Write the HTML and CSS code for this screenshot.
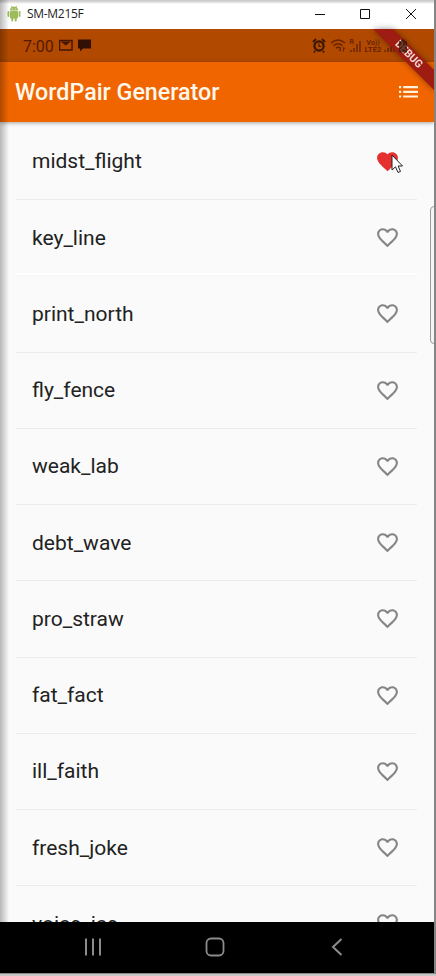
FILE: index.html
```html
<!DOCTYPE html>
<html lang="en">
<head>
<meta charset="utf-8">
<title>WordPair Generator</title>
<link rel="stylesheet" href="styles.css">
</head>
<body>
<svg class="defs" width="0" height="0">
  <symbol id="heart-outline" viewBox="0 0 24 24"><path d="M16.5 3c-1.74 0-3.41.81-4.5 2.09C10.91 3.81 9.24 3 7.5 3 4.42 3 2 5.42 2 8.5c0 3.78 3.4 6.86 8.55 11.54L12 21.35l1.45-1.32C18.6 15.36 22 12.28 22 8.5 22 5.42 19.58 3 16.5 3zm-4.4 15.55l-.1.1-.1-.1C7.14 14.24 4 11.39 4 8.5 4 6.5 5.5 5 7.5 5c1.54 0 3.04.99 3.57 2.36h1.87C13.46 5.99 14.96 5 16.5 5c2 0 3.5 1.5 3.5 3.5 0 2.89-3.14 5.74-7.9 10.05z"/></symbol>
  <symbol id="heart-full" viewBox="0 0 24 24"><path d="M12 21.35l-1.45-1.32C5.4 15.36 2 12.28 2 8.5 2 5.42 4.42 3 7.5 3c1.74 0 3.41.81 4.5 2.09C13.09 3.81 14.76 3 16.5 3 19.58 3 22 5.42 22 8.5c0 3.78-3.4 6.86-8.55 11.54z"/></symbol>
</svg>
<div class="window">
  <header class="titlebar">
    <svg class="android" width="14" height="17" viewBox="0 0 14 17">
      <g fill="#9dbb5c"><path d="M3 5.4a4 3.9 0 0 1 8 0z"/><rect x="3" y="6" width="8" height="7.5" rx="1"/><rect x=".5" y="6" width="1.9" height="6" rx=".9"/><rect x="11.6" y="6" width="1.9" height="6" rx=".9"/><rect x="4.3" y="12" width="2" height="4.5" rx="1"/><rect x="7.7" y="12" width="2" height="4.5" rx="1"/></g>
      <path d="M4 .5l1.2 2M10 .5l-1.2 2" stroke="#9dbb5c" stroke-width=".7"/><circle cx="5.3" cy="3.7" r=".5" fill="#fff"/><circle cx="8.7" cy="3.7" r=".5" fill="#fff"/>
    </svg>
    <span class="device">SM-M215F</span>
    <svg class="controls" width="106" height="12" viewBox="0 0 106 12" fill="none" stroke="#111"><path d="M0 6.5h10M45.5 1.5h9v9h-9zM91 1l10 10M101 1L91 11"/></svg>
  </header>
  <div class="statusbar">
    <span class="clock">7:00</span>
    <svg class="notices" width="34" height="14" viewBox="0 0 34 14"><path d="M.5 1.500h12.500v9.500H.5z" fill="none" stroke="#441600" stroke-width="1.5"/><path d="M1.500 2.500l5.200 4L12 2.500z" fill="#441600"/><path d="M19 .5h13v9h-8l-3 3v-3h-2z" fill="#321004"/></svg>
    <svg class="signals" width="100" height="18" viewBox="0 0 100 18">
      <g fill="none" stroke="#391504"><circle cx="7" cy="9" r="4.6" stroke-width="2.2"/><path d="M1 5l3-3M13 5l-3-3M3 14l-1 1.5M11 14l1 1.5" stroke-width="1.8"/><path d="M7 6.5V9.5h2.2" stroke-width="1.1"/></g>
      <g fill="none" stroke="#682300" stroke-width="1.5"><path d="M19 6q7-6 14 0M21.5 8.7q4.500-4 9 0M24 11.300q2-2 4 0"/><path d="M28.500 10v4M27 12.500l1.500 1.800M31.500 14.500v-4M33 12l-1.500-1.800" stroke-width="1"/></g>
      <g class="net" fill="#682300"><text x="37.500" y="7">R</text><text x="54.500" y="8">Vo))</text><text x="52.500" y="15.300" textLength="17" lengthAdjust="spacingAndGlyphs">LTE2</text></g>
      <path d="M39 15v-2M42 15v-4M45 15V7M48 15V4M73 15v-2M76 15v-4M79 15V7M82 15V4" stroke="#682300" stroke-width="1.400"/>
    </svg>
  </div>
  <div class="appbar">
    <h1>WordPair Generator</h1>
    <svg width="20" height="12" viewBox="0 0 20 12" fill="#fff3dc"><path d="M0 0h2.200v2.200H0zM4.200 0H19v2.200H4.200zM0 4.700h2.200v2.200H0zM4.200 4.700H19v2.200H4.200zM0 9.400h2.200v2.200H0zM4.200 9.400H19v2.200H4.200z"/></svg>
  </div>
  <main class="list">
    <div class="row"><span>midst_flight</span><svg class="heart saved"><use href="#heart-full"/></svg></div>
    <div class="row faint"><span>key_line</span><svg class="heart"><use href="#heart-outline"/></svg></div>
    <div class="row"><span>print_north</span><svg class="heart"><use href="#heart-outline"/></svg></div>
    <div class="row"><span>fly_fence</span><svg class="heart"><use href="#heart-outline"/></svg></div>
    <div class="row"><span>weak_lab</span><svg class="heart"><use href="#heart-outline"/></svg></div>
    <div class="row"><span>debt_wave</span><svg class="heart"><use href="#heart-outline"/></svg></div>
    <div class="row"><span>pro_straw</span><svg class="heart"><use href="#heart-outline"/></svg></div>
    <div class="row"><span>fat_fact</span><svg class="heart"><use href="#heart-outline"/></svg></div>
    <div class="row"><span>ill_faith</span><svg class="heart"><use href="#heart-outline"/></svg></div>
    <div class="row"><span>fresh_joke</span><svg class="heart"><use href="#heart-outline"/></svg></div>
    <div class="row"><span>voice_ice</span><svg class="heart"><use href="#heart-outline"/></svg></div>
  </main>
  <nav class="navbar">
    <svg width="18" height="18" viewBox="0 0 18 18" fill="none" stroke="#8c8c8c" stroke-width="2"><path d="M2 .5v17M9 .5v17M16 .5v17"/></svg>
    <svg class="home" width="20" height="20" viewBox="0 0 20 20" fill="none" stroke="#8c8c8c" stroke-width="1.800"><rect x="1.500" y="1.500" width="17" height="17" rx="4.500"/></svg>
    <svg width="12" height="18" viewBox="0 0 12 18" fill="none" stroke="#8c8c8c" stroke-width="2"><path d="M10.500 1L2 9l8.500 8"/></svg>
  </nav>
  <div class="edge-shade"></div>
  <svg class="ribbon" width="64" height="64" viewBox="0 0 64 64">
    <path d="M0 0h20L62 42v20z" fill="#9f1c12"/>
    <text transform="translate(36 25) rotate(45)" text-anchor="middle" y="3.600" textLength="34" lengthAdjust="spacingAndGlyphs">DEBUG</text>
    <path d="M26 12h2v-1.500h4V12h2v11.500h-8z" fill="#391504" fill-opacity=".75"/>
  </svg>
  <div class="side-handle"></div>
  <svg class="pointer" width="13" height="20" viewBox="0 0 13 20"><path d="M1 1v15l3.500-3.200L7 18.500l2.500-1.100-2.400-5.400H11.500z" fill="#fff" stroke="#222"/></svg>
</div>
</body>
</html>
```

FILE: styles.css
```css
* { box-sizing: border-box; }
body { margin: 0; background: #c9c6c6; font-family: Roboto, sans-serif; }
svg { display: block; flex: none; }
.defs { position: absolute; }
.window {
  position: relative;
  display: flex;
  flex-direction: column;
  width: 436px;
  height: 974px;
  overflow: hidden;
  border-right: 2px solid #858585;
  border-bottom: 1px solid #888;
  background: #fafafa;
}
.titlebar {
  display: flex;
  align-items: center;
  height: 29px;
  padding: 0 18px 2px 7px;
  background: linear-gradient(#c6c6c6 0, #ddd 2px, #fff 4px);
}
.device {
  margin-left: 6px;
  color: #222;
  font: 12px/16px "Open Sans", sans-serif;
  letter-spacing: -0.3px;
}
.controls { margin-left: auto; margin-right: -5px; }
.statusbar {
  display: flex;
  align-items: center;
  height: 33px;
  padding: 0 22px 0 23px;
  background: #b14a00;
}
.clock { width: 36px; padding-top: 1px; color: #541900; font-size: 16px; }
.signals { margin-left: auto; }
.net { font: bold 7px Roboto, sans-serif; }
.appbar {
  z-index: 1;
  display: flex;
  align-items: center;
  justify-content: space-between;
  height: 60px;
  padding: 0 15px;
  background: #f06500;
  box-shadow: 0 1px 4px rgba(0, 0, 0, .35);
}
.appbar h1 { margin: 0; color: #fff8ec; font-size: 23.250px; font-weight: 500; line-height: 30px; }
.list { flex: 1; min-height: 0; padding: 1.800px 17px 0 16px; overflow: hidden; }
.row {
  display: flex;
  align-items: center;
  justify-content: space-between;
  height: 76.250px;
  padding: 0 17px 0 16px;
  border-bottom: 1px solid #ececec;
  color: #222;
  font-size: 21px;
}
.faint { border-bottom-color: #f6f6f6; box-shadow: inset 0 -2px #fff; }
.heart { width: 25px; height: 25px; fill: #858585; }
.saved { fill: #e53030; }
.navbar {
  z-index: 3;
  display: flex;
  justify-content: space-between;
  align-items: center;
  height: 51px;
  padding: 0 91px 2px 84px;
  background: #000;
}
.home { margin-right: 4px; }
.edge-shade {
  position: absolute;
  z-index: 2;
  inset: 0 auto 0 0;
  width: 9px;
  background: linear-gradient(90deg, rgba(0, 0, 0, .27), rgba(0, 0, 0, 0));
}
.ribbon { position: absolute; z-index: 2; top: 29px; left: 373px; filter: drop-shadow(0 0 3px rgba(0, 0, 0, .4)); }
.ribbon text { fill: #f0d8d2; font: bold 11px Roboto, sans-serif; }
.side-handle {
  position: absolute;
  z-index: 2;
  top: 206px;
  right: -4px;
  width: 8px;
  height: 138px;
  border: 1px solid #999;
  border-radius: 4px;
  background: #f5f5f5;
}
.pointer { position: absolute; z-index: 4; left: 391px; top: 154px; }
```
